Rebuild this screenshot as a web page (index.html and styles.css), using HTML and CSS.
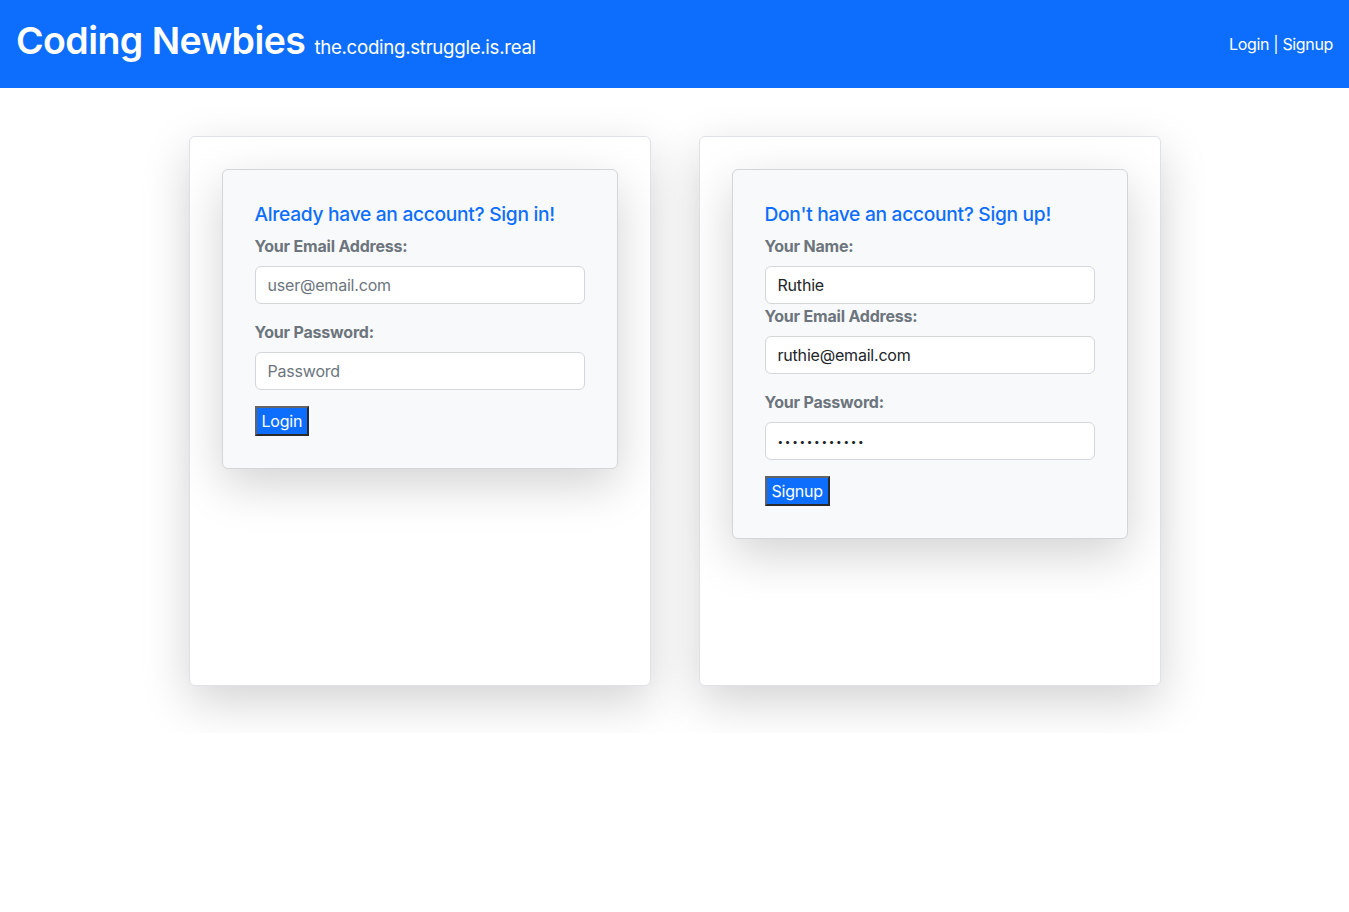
FILE: index.html
```html
<!DOCTYPE html>
<html lang="en">
<head>
<meta charset="utf-8">
<title>Coding Newbies</title>
<link rel="stylesheet" href="styles.css">
</head>
<body>
<header class="topbar">
  <div class="brand">
    <h1 class="brand-title">Coding Newbies</h1>
    <span class="brand-tag">the.coding.struggle.is.real</span>
  </div>
  <nav class="topnav"><a href="#">Login</a> | <a href="#">Signup</a></nav>
</header>
<main class="main">
  <div class="cards">
    <section class="outer-card">
      <form class="inner-card">
        <h2 class="form-title">Already have an account? Sign in!</h2>
        <label class="field-label">Your Email Address:</label>
        <input class="field-input" type="email" placeholder="user@email.com">
        <label class="field-label spaced">Your Password:</label>
        <input class="field-input" type="password" placeholder="Password">
        <button class="btn" type="button">Login</button>
      </form>
    </section>
    <section class="outer-card">
      <form class="inner-card">
        <h2 class="form-title">Don't have an account? Sign up!</h2>
        <label class="field-label">Your Name:</label>
        <input class="field-input" type="text" value="Ruthie">
        <label class="field-label">Your Email Address:</label>
        <input class="field-input" type="email" value="ruthie@email.com">
        <label class="field-label spaced">Your Password:</label>
        <input class="field-input secret" type="password" value="ruthiepasswd">
        <button class="btn" type="button">Signup</button>
      </form>
    </section>
  </div>
</main>
</body>
</html>
```

FILE: styles.css
```css
* { box-sizing: border-box; }
html, body { margin: 0; padding: 0; background: #fff; }
body {
  font-family: Inter, "Liberation Sans", Arial, sans-serif;
  font-size: 16px;
  line-height: 1.5;
  color: #212529;
}
.topbar {
  height: 88px;
  background: #0d6efd;
  color: #fff;
  display: flex;
  align-items: center;
  justify-content: space-between;
  padding: 0 16px;
}
.brand { display: flex; align-items: baseline; gap: 9px; margin-bottom: 8px; }
.brand-title {
  margin: 0;
  font-size: 37.5px;
  font-weight: 600;
  line-height: 1.2;
  letter-spacing: -0.55px;
}
.brand-tag { font-size: 18.7px; letter-spacing: -0.3px; }
.topnav { font-size: 16px; letter-spacing: -0.35px; }
.topnav a { color: #fff; text-decoration: none; }
.main {
  overflow: hidden;
  padding: 48px 0 47px;
}
.cards {
  display: flex;
  justify-content: center;
  gap: 48px;
}
.outer-card {
  width: 462px;
  height: 550px;
  background: #fff;
  border: 1px solid #dee2e6;
  border-radius: 6px;
  box-shadow: 0 16px 48px rgba(0,0,0,0.175);
  padding: 32px;
}
.inner-card {
  display: flex;
  flex-direction: column;
  align-items: flex-start;
  background: #f8f9fa;
  border: 1px solid #d3d5d8;
  border-radius: 6px;
  box-shadow: 0 16px 48px rgba(0,0,0,0.175);
  padding: 32px;
}
.form-title {
  margin: 0 0 8px;
  font-size: 19.2px;
  font-weight: 500;
  line-height: 24px;
  color: #0d6efd;
  letter-spacing: -0.3px;
}
.field-label {
  font-weight: 700;
  color: #6c757d;
  line-height: 24px;
  margin-bottom: 8px;
  letter-spacing: -0.2px;
}
.field-label.spaced { margin-top: 16px; }
.field-input {
  width: 100%;
  height: 38px;
  padding: 6px 12px;
  font: inherit;
  font-size: 16px;
  letter-spacing: -0.2px;
  color: #212529;
  background: #fff;
  border: 1px solid #d3d6da;
  border-radius: 6px;
  outline: none;
}
.field-input.secret { font-size: 10px; letter-spacing: 1.7px; }
.field-input::placeholder { color: #6c757d; opacity: 1; }
.btn {
  margin-top: 16px;
  height: 30px;
  padding: 0 5px;
  font: inherit;
  font-size: 16px;
  letter-spacing: -0.2px;
  line-height: 24px;
  color: #fff;
  background: #0d6efd;
  border: 2px solid;
  border-color: #646464 #2a2a2a #2a2a2a #646464;
  border-radius: 0;
}
```
